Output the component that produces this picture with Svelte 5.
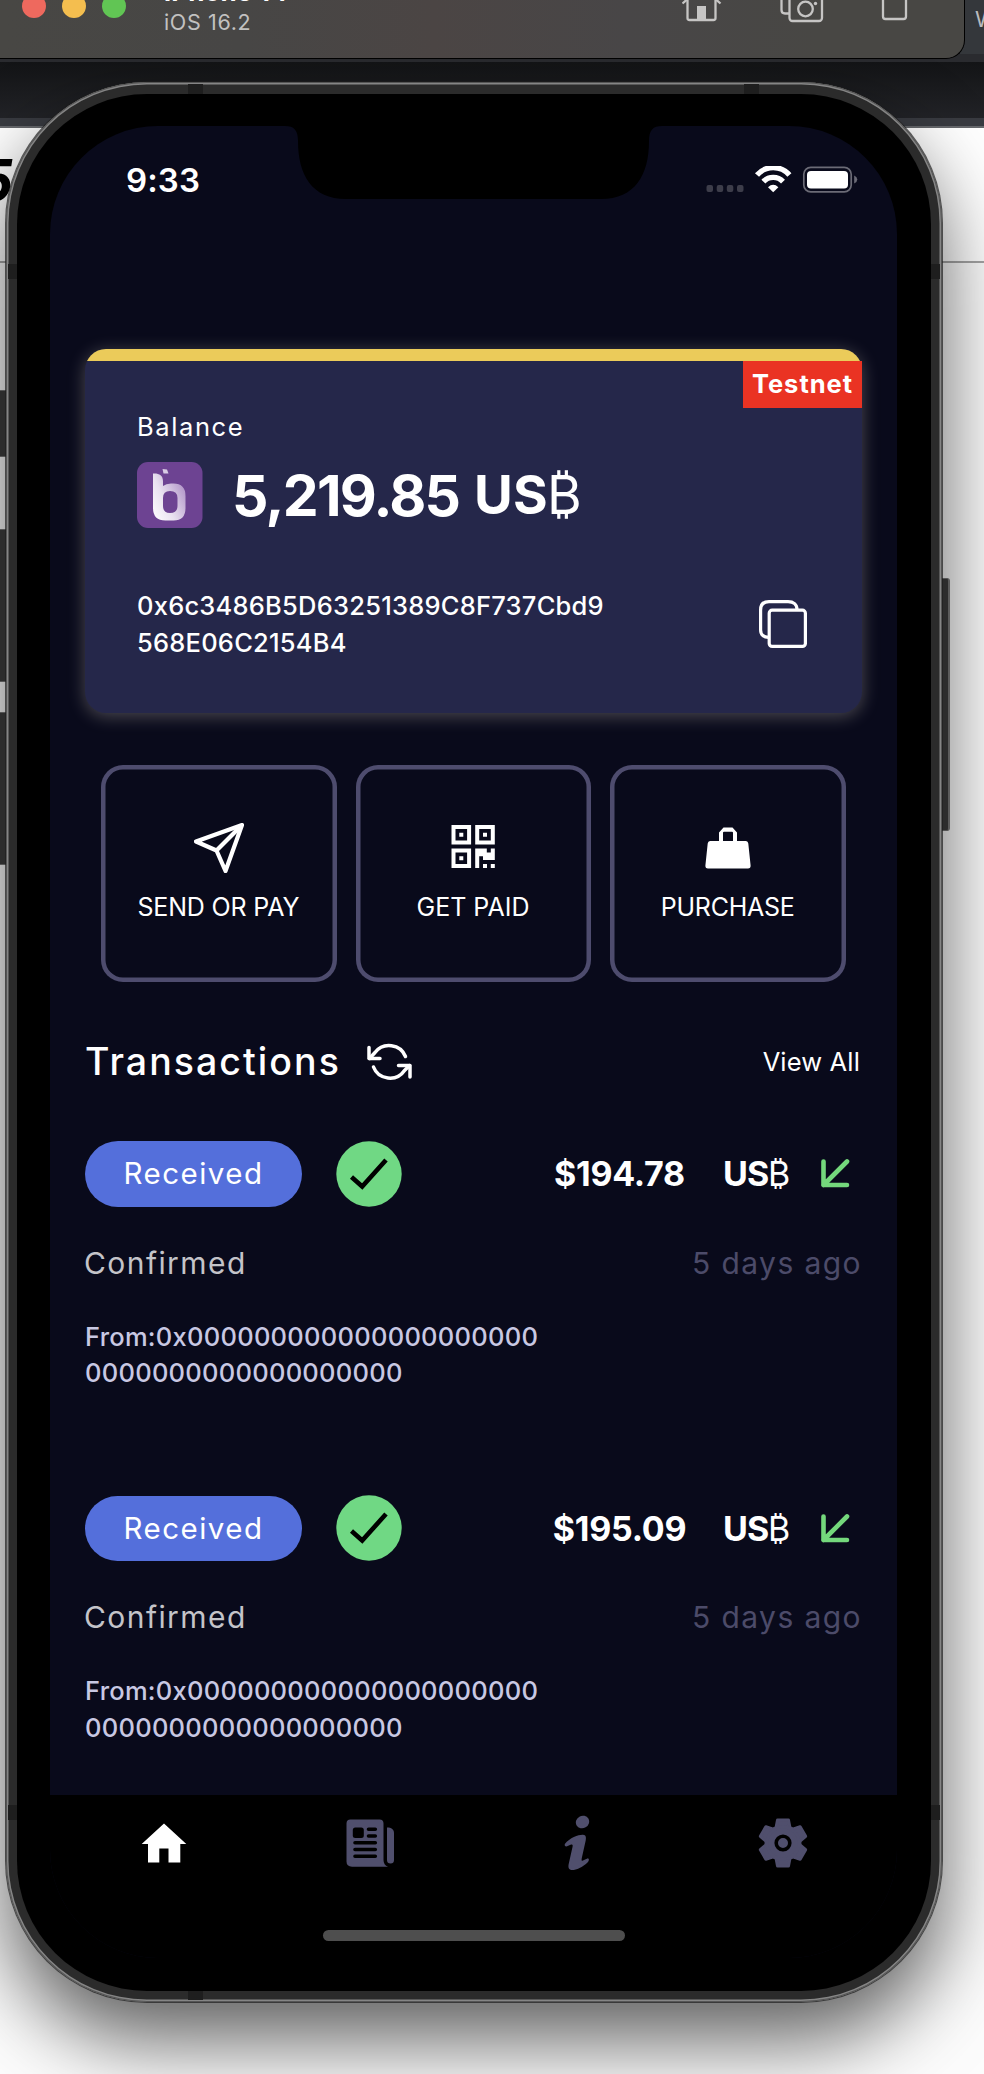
<script>
  const actions = [
    { id: 'send', label: 'SEND OR PAY', spacing: -0.17 },
    { id: 'qr', label: 'GET PAID', spacing: 0 },
    { id: 'bag', label: 'PURCHASE', spacing: -0.26 }
  ];

  const transactions = [
    { amount: '$194.78', age: '5 days ago' },
    { amount: '$195.09', age: '5 days ago' }
  ];

  const tabs = ['home', 'news', 'info', 'settings'];
  const teeth = [0, 60, 120, 180, 240, 300];
</script>

<div class="desktop">
  <div class="browser">
    <div class="strip tabs-strip"><span>W</span></div>
    <div class="strip under-tabs"></div>
    <div class="strip toolbar"></div>
    <div class="strip bookmarks"></div>
    <div class="strip edge"></div>
    <div class="page-head"><b>5</b></div>
    <div class="page-body"></div>
  </div>

  <div class="phone-shadow"></div>

  <div class="sim-bar">
    <i class="light red"></i><i class="light amber"></i><i class="light green"></i>
    <div class="sim-title">
      <strong>iPhone 14</strong>
      <span>iOS 16.2</span>
    </div>
    <svg class="sim-icons" width="228" height="24" viewBox="682 0 228 24" fill="none" stroke="#c6c5c4" stroke-width="2.300">
      <path d="M682.500 3.500 L701.500 -13 L720.500 3.500" />
      <path d="M687.500 0 V18 Q687.500 20 689.500 20 H713.500 Q715.500 20 715.500 18 V0" />
      <rect x="697" y="6" width="9" height="14" fill="#c6c5c4" stroke="none" />
      <path d="M781.500 0 V10 Q781.500 13.500 785 13.500 H789" />
      <rect x="789.500" y="-8" width="32.500" height="29" rx="3" />
      <circle cx="805.500" cy="9" r="7.300" />
      <circle cx="815.500" cy="3.500" r="1.700" fill="#c6c5c4" stroke="none" />
      <rect x="883" y="-20" width="23" height="39" rx="2.500" />
    </svg>
  </div>

  <i class="key left mute"></i>
  <i class="key left vol-up"></i>
  <i class="key left vol-down"></i>
  <i class="key right"></i>

  <div class="phone">
    <i class="band h" style:left="182px" style:top="2px"></i>
    <i class="band h" style:left="738px" style:top="2px"></i>
    <i class="band h" style:left="182px" style:bottom="2px"></i>
    <i class="band v" style:left="2px" style:top="182px"></i>
    <i class="band v" style:right="2px" style:top="182px"></i>
    <i class="band v" style:left="2px" style:bottom="182px"></i>
    <i class="band v" style:right="2px" style:bottom="182px"></i>

    <div class="bezel">
      <div class="screen">
        <svg class="notch" width="377" height="74" viewBox="285 125 377 74">
          <path d="M285 125 V126 C294 126 298 130 298 141 C298 175 312 199 346 199 H601 C635 199 649 175 649 141 C649 130 653 126 662 126 V125 Z" fill="#000" />
        </svg>

        <header class="status">
          <span class="clock">9:33</span>
          <svg width="152" height="28" viewBox="706 166 152 28">
            <g fill="#3d3d4a">
              <rect x="706.500" y="185" width="6.500" height="7" rx="2" />
              <rect x="716.700" y="185" width="6.500" height="7" rx="2" />
              <rect x="726.800" y="185" width="6.500" height="7" rx="2" />
              <rect x="737" y="185" width="6.500" height="7" rx="2" />
            </g>
            <g fill="none" stroke="#fff" stroke-width="5.400">
              <path d="M757 175 A21.500 21.500 0 0 1 789.400 175" />
              <path d="M763.400 181.600 A13.500 13.500 0 0 1 783 181.600" />
            </g>
            <path d="M768 187.200 Q773.200 182.500 778.400 187.200 L773.200 192.300 Z" fill="#fff" />
            <rect x="803.800" y="167.300" width="47.400" height="24.600" rx="7" fill="none" stroke="#6b6b76" stroke-width="1.700" />
            <rect x="807" y="171" width="41" height="17.500" rx="4" fill="#fff" />
            <path d="M854.200 175.500 Q857.300 177 857.300 179.500 Q857.300 182 854.200 183.500 Z" fill="#6b6b76" />
          </svg>
        </header>

        <main>
          <section class="card">
            <div class="card-top"></div>
            <span class="badge">Testnet</span>
            <div class="card-body">
              <div class="balance-label">Balance</div>
              <div class="balance">
                <svg class="logo" width="66" height="66" viewBox="0 0 66 66">
                  <defs>
                    <linearGradient id="shine" x1="0" y1="1" x2="1" y2="0.300">
                      <stop offset="0" stop-color="#fff" />
                      <stop offset="0.450" stop-color="#e9e2f0" />
                      <stop offset="1" stop-color="#b194c8" />
                    </linearGradient>
                  </defs>
                  <rect width="65.500" height="66" rx="11" fill="#6d4392" />
                  <path fill="url(#shine)" fill-rule="evenodd" d="M16 11.500 C21.500 11 26 13 26 19 V24 Q29 21.500 34 21.500 H36.500 Q48.500 21.500 48.500 34 V46 Q48.500 58.500 36.500 58.500 H28.500 Q16 58.500 16 46 Z M33 29 Q26 29 26 36 V44 Q26 51 33 51 Q40.500 51 40.500 44 V36 Q40.500 29 33 29 Z" />
                  <path fill="#d9cce5" d="M25.500 7 L30 7.500 L31.500 11.500 H26.500 Z" />
                </svg>
                <span class="figure">5,219.85</span><span class="unit">US</span><span class="coin">₿</span>
              </div>
              <div class="address">
                <p><span>0x6c3486B5D63251389C8F737Cbd9</span><span>568E06C2154B4</span></p>
                <svg width="48" height="48" viewBox="0 0 48 48" fill="none" stroke="#fff" stroke-width="3.200">
                  <rect x="10.200" y="10.200" width="36.200" height="36.200" rx="3" />
                  <path d="M9.500 37.300 C5 37.300 1.600 35 1.600 30 V10 Q1.600 1.600 10 1.600 H29 C34.500 1.600 38 4.500 38 9.500" />
                </svg>
              </div>
            </div>
          </section>

          <section class="actions">
            {#each actions as action}
              <div class="action">
                {#if action.id === 'send'}
                  <svg width="50" height="50" viewBox="0 0 50 50" fill="none" stroke="#fff" stroke-width="4.200" stroke-linejoin="round">
                    <path d="M48 2 L2 18.500 L22.500 27.500 L31.500 48 Z" />
                    <path d="M22.500 27.500 L46 4" />
                  </svg>
                {:else if action.id === 'qr'}
                  <svg width="50" height="50" viewBox="0 0 50 50" fill="#fff">
                    <path fill-rule="evenodd" d="M3.500 2h19.600v19.600H3.500zM7.500 6v11.600h11.600V6z M27.200 2h19.600v19.600H27.200zM31.200 6v11.600h11.600V6z M3.500 25.400h19.600V45H3.500zM7.500 29.400V41h11.600V29.400z" />
                    <path d="M11.300 9.800h4v4h-4z M35 9.800h4v4h-4z M11.300 33.200h4v4h-4z" />
                    <path d="M27.200 25.400h11.600v4h4v-4h4v11.600H35v-3.800h-3.800V45h-4z M35 41h4v4h-4z M42.800 41h4v4h-4z" />
                  </svg>
                {:else}
                  <svg width="50" height="50" viewBox="0 0 50 50" fill="#fff">
                    <path fill-rule="evenodd" d="M16 18 V9.500 L20.500 4.500 H29.500 L34 9.500 V18 H43 Q45 18 45.300 20.500 L47.600 42.500 Q47.800 45.500 45 45.500 H5 Q2.200 45.500 2.400 42.500 L4.700 20.500 Q5 18 7 18 Z M20 18 H30 V9.800 Q30 8.800 29 8.800 H21 Q20 8.800 20 9.800 Z" />
                  </svg>
                {/if}
                <span style:letter-spacing="{action.spacing}px">{action.label}</span>
              </div>
            {/each}
          </section>

          <section class="list-head">
            <h2>Transactions</h2>
            <svg width="46" height="40" viewBox="0 0 46 40" fill="none" stroke="#fff" stroke-width="3.500" stroke-linecap="round" stroke-linejoin="round">
              <path d="M38.500 14.500 A17.500 17 0 0 0 8 10.500 L2.500 16.500" />
              <path d="M2 5.500 V16.500 H13" />
              <path d="M6.500 25 A17.500 17 0 0 0 37.500 28.500 L42.500 23.500" />
              <path d="M43 35 V23.500 H31.500" />
            </svg>
            <span class="view-all">View All</span>
          </section>

          {#each transactions as tx}
            <article class="tx">
              <div class="tx-row">
                <span class="pill">Received</span>
                <svg class="check" width="66" height="66" viewBox="0 0 66 66">
                  <circle cx="33" cy="33" r="32.700" fill="#70d884" />
                  <path d="M15.500 36 L26.200 45.500 L50 19" fill="none" stroke="#000" stroke-width="4.600" />
                </svg>
                <span class="amount">{tx.amount}</span>
                <span class="tx-unit">US</span><span class="tx-coin">₿</span>
                <svg class="arrow" width="29" height="29" viewBox="0 0 29 29" fill="none" stroke="#74d87c" stroke-width="4.600" stroke-linecap="round" stroke-linejoin="round">
                  <path d="M26 2.500 L2.500 26 M2.500 2.500 V26 H26" />
                </svg>
              </div>
              <div class="tx-state"><span>Confirmed</span><time>{tx.age}</time></div>
              <p class="from"><span>From:0x000000000000000000000</span><span>0000000000000000000</span></p>
            </article>
          {/each}
        </main>

        <nav>
          <div class="tabs">
            {#each tabs as tab}
              <div class="tab">
                {#if tab === 'home'}
                  <svg width="46" height="40" viewBox="0 0 46 40" fill="#fff">
                    <path d="M23 0.500 L45.300 21 H39.300 V39.500 H27.500 V25.500 H18.300 V39.500 H7 V21 H0.700 Z" />
                  </svg>
                {:else if tab === 'news'}
                  <svg width="48" height="48" viewBox="0 0 48 48">
                    <path fill="#504f6d" d="M4.500 0.500 H33.500 Q37.500 0.500 37.500 4.500 V41 Q37.500 46 42 47.800 H6 Q0.500 47.500 0.500 42.500 V4.500 Q0.500 0.500 4.500 0.500 Z" />
                    <path fill="#504f6d" d="M41 8.500 C45.500 8.500 48 10.500 48 14 V41 Q48 44.500 44.500 44.500 Q41 44.500 41 41 Z" />
                    <rect x="6.800" y="8.500" width="11" height="10.500" rx="2.500" />
                    <path fill="none" stroke="#000" stroke-width="3.600" stroke-linecap="round" d="M22.500 10.200 H29.300 M22.500 17 H29.300 M9 23.800 H29.300 M9 30.500 H29.300 M9 37.300 H29.300" />
                  </svg>
                {:else if tab === 'info'}
                  <svg width="26" height="56" viewBox="0 0 26 56" fill="#504f6d">
                    <ellipse cx="18.500" cy="7" rx="6.800" ry="6.200" transform="rotate(-30 18.500 7)" />
                    <path d="M0.800 29 C6 22.500 15 19.500 19 19.800 C22 20 22.300 22.500 21.700 25.500 L17.800 43 C17.200 46 18 46.500 20 45 L24 43.300 Q25.800 44.500 24 47 C18 53 11 55.500 7.500 55 C4.500 54.500 4 52 4.800 48.500 L8.500 32 C9 29.500 8.500 29 6.500 29.700 L2.500 31.500 Q0.300 31.500 0.800 29 Z" />
                  </svg>
                {:else}
                  <svg width="50" height="50" viewBox="-25 -25 50 50">
                    <g fill="#504f6d" stroke="#504f6d" stroke-width="3" stroke-linejoin="round">
                      {#each teeth as angle}
                        <path transform="rotate({angle})" d="M-5.500 -23 H5.500 L7 -15.300 L12 -12.500 L-12 -12.500 L-7 -15.300 Z" />
                      {/each}
                      <circle r="16" />
                    </g>
                    <circle r="6.800" fill="#504f6d" stroke="#000" stroke-width="3.600" />
                  </svg>
                {/if}
              </div>
            {/each}
          </div>
          <div class="home-bar"></div>
        </nav>
      </div>
    </div>
  </div>
</div>

<style>
  :global(body) { margin: 0; background: #fff; }
  .desktop {
    position: relative;
    width: 984px;
    height: 2074px;
    overflow: hidden;
    font-family: Inter, sans-serif;
    color: #fff;
    background: #fff;
  }
  svg { display: block; flex: none; }
  i { display: block; }

  .browser { display: flex; flex-direction: column; height: 100%; }
  .strip { flex: none; }
  .tabs-strip { height: 54px; background: #34373b; display: flex; justify-content: flex-end; }
  .tabs-strip span { width: 9px; font-size: 22px; line-height: 39px; color: #b9babd; white-space: nowrap; overflow: hidden; }
  .under-tabs { height: 8px; background: #2a2b2f; }
  .toolbar { height: 56px; background: linear-gradient(#131416, #222327); }
  .bookmarks { height: 8px; background: #393b41; }
  .edge { height: 2px; background: #66686c; }
  .page-head { height: 133px; border-bottom: 2px solid #a5a5a5; }
  .page-head b { display: block; margin-left: -24px; font-size: 58px; line-height: 104px; font-style: italic; color: #000; }
  .page-body { flex: 1; background: #fcfcfc; }

  .phone-shadow {
    position: absolute;
    left: 6px;
    top: 82px;
    width: 936px;
    height: 1920px;
    border-radius: 141px;
    box-shadow: 0 38px 80px rgba(0, 0, 0, 0.62);
  }

  .sim-bar {
    position: absolute;
    left: 0;
    top: 0;
    width: 965px;
    height: 59px;
    box-sizing: border-box;
    display: flex;
    padding-left: 22px;
    border-right: 1px solid #000;
    border-bottom: 1px solid #000;
    border-radius: 0 0 19px 0;
    background: linear-gradient(90deg, #484744, #474645 25%, #4b4544 45%, #484647 65%, #484744 85%);
  }
  .light { width: 24px; height: 24px; margin: -6px 16px 0 0; border-radius: 50%; }
  .red { background: #ee695e; }
  .amber { background: #f4be4f; }
  .green { background: #61c554; }
  .sim-title { display: flex; flex-direction: column; width: 480px; margin: -23px 0 0 22px; white-space: nowrap; }
  .sim-title strong { font-size: 26px; line-height: 30px; letter-spacing: 0.12px; }
  .sim-title span { margin-top: -1px; font-size: 21.5px; line-height: 32px; letter-spacing: 0.64px; color: #c2c1c0; }
  .sim-icons { margin-left: 38px; }

  .key { position: absolute; box-sizing: border-box; background: #2c2c2c; border: 1px solid #555; }
  .left { left: -2px; width: 10px; }
  .mute { top: 390px; height: 67px; }
  .vol-up { top: 529px; height: 153px; }
  .vol-down { top: 712px; height: 153px; }
  .right { left: 940px; width: 10px; top: 578px; height: 253px; border-radius: 0 3px 3px 0; border-right: 2px solid #5b5b5b; }

  .phone {
    position: absolute;
    left: 6px;
    top: 82px;
    width: 936px;
    height: 1920px;
    box-sizing: border-box;
    padding: 11.5px 11px;
    border-radius: 141px;
    background: #2b2b2b;
    box-shadow: inset 0 0 0 1px #555, inset 0 0 0 2.500px #858585, 0 0 0 1px rgba(30, 30, 30, 0.7);
  }
  .band { position: absolute; background: #1e1e1e; }
  .band.h { width: 15px; height: 10px; }
  .band.v { width: 9px; height: 15px; }
  .bezel {
    position: relative;
    box-sizing: border-box;
    height: 100%;
    padding: 32.5px 34px 32px 33px;
    border-radius: 130px;
    background: #000;
  }
  .screen {
    position: relative;
    display: flex;
    flex-direction: column;
    width: 847px;
    height: 1832px;
    border-radius: 108px;
    overflow: hidden;
    background: #090a1b;
  }
  .notch { position: absolute; left: 235px; top: -1px; }

  .status { display: flex; justify-content: space-between; align-items: center; flex: none; height: 108px; padding: 0 39px 0 76px; }
  .clock { font-size: 33px; font-weight: 600; letter-spacing: 0.12px; }

  main { flex: none; height: 1561px; box-sizing: border-box; overflow: hidden; padding: 115px 35px 0; }
  .card {
    position: relative;
    height: 364px;
    border-radius: 21px;
    background: #25274a;
    box-shadow: 0 3px 18px rgba(255, 245, 225, 0.28);
  }
  .card-top { height: 12px; overflow: hidden; }
  .card-top::before { content: ''; display: block; height: 40px; border-radius: 21px 21px 0 0; background: #ebcb5a; }
  .badge {
    position: absolute;
    right: 0;
    top: 12px;
    width: 119px;
    height: 47px;
    font-size: 25.5px;
    line-height: 46px;
    font-weight: 700;
    letter-spacing: 1px;
    text-align: center;
    background: #ea3323;
  }
  .card-body { padding: 48px 55px 0 53px; }
  .balance-label { margin-left: -1px; font-size: 25.5px; line-height: 36px; letter-spacing: 1.6px; }
  .balance { display: flex; align-items: center; height: 66px; margin-top: 17px; }
  .logo { margin: 0 29px 0 -1px; }
  .figure { width: 242px; font-size: 57px; font-weight: 700; letter-spacing: -1.7px; }
  .unit { width: 73px; font-size: 53px; font-weight: 700; letter-spacing: 0.2px; }
  .coin { font-size: 53px; font-weight: 400; }
  .address { display: flex; justify-content: space-between; align-items: center; height: 74px; margin-top: 59px; }
  .address p { margin: 0 0 0 -1px; font-size: 25.5px; line-height: 37px; font-weight: 500; letter-spacing: 0.23px; }
  p span { display: block; }

  .actions { display: grid; grid-template-columns: repeat(3, 1fr); gap: 19px; margin: 52px 16px 0; }
  .action {
    display: flex;
    flex-direction: column;
    align-items: center;
    height: 217px;
    box-sizing: border-box;
    padding-top: 58px;
    border-radius: 22px;
    box-shadow: inset 0 0 0 4.500px #4e4c6e;
  }
  .action span { margin: 19px 1px 0 0; font-size: 25px; line-height: 30px; white-space: nowrap; }

  .list-head { display: flex; align-items: center; height: 50px; margin-top: 54.5px; }
  h2 { width: 282px; margin: 0; font-size: 37.5px; line-height: 50px; font-weight: 500; letter-spacing: 2.05px; }
  .view-all { margin-left: auto; padding-right: 2px; font-size: 25.5px; letter-spacing: 0.15px; }

  .tx { height: 354.5px; padding-top: 54.5px; box-sizing: border-box; }
  .tx-row { display: flex; align-items: center; height: 65.5px; }
  .pill {
    width: 217px;
    height: 65.5px;
    border-radius: 33px;
    background: #546fdb;
    font-size: 29.5px;
    line-height: 65.5px;
    letter-spacing: 1.5px;
    text-align: center;
  }
  .check { margin-left: 34px; }
  .amount { width: 140px; margin-left: 147.5px; font-size: 34px; font-weight: 700; letter-spacing: -0.25px; text-align: center; }
  .tx-unit { width: 45px; margin-left: 33.5px; font-size: 34px; font-weight: 700; letter-spacing: -0.89px; }
  .tx-coin { width: 22px; font-size: 34px; font-weight: 400; }
  .arrow { margin-left: auto; margin-right: 12px; }
  .tx-state { display: flex; justify-content: space-between; margin: 36px 0 0 -1px; font-size: 30px; line-height: 40px; letter-spacing: 1.42px; color: #c4c4c9; }
  .tx-state time { color: #4c4b69; }
  .from { margin: 36px 0 0; font-size: 25.5px; line-height: 36.6px; font-weight: 500; letter-spacing: 0.26px; color: #c8c8e3; }

  nav { flex: 1; background: #000; }
  .tabs { display: grid; grid-template-columns: repeat(4, 1fr); height: 96px; padding: 0 10.5px; }
  .tab { display: grid; place-items: center; }
  .home-bar { width: 302px; height: 11px; margin: 39px auto 0; border-radius: 6px; background: #4e4e4e; }
</style>
